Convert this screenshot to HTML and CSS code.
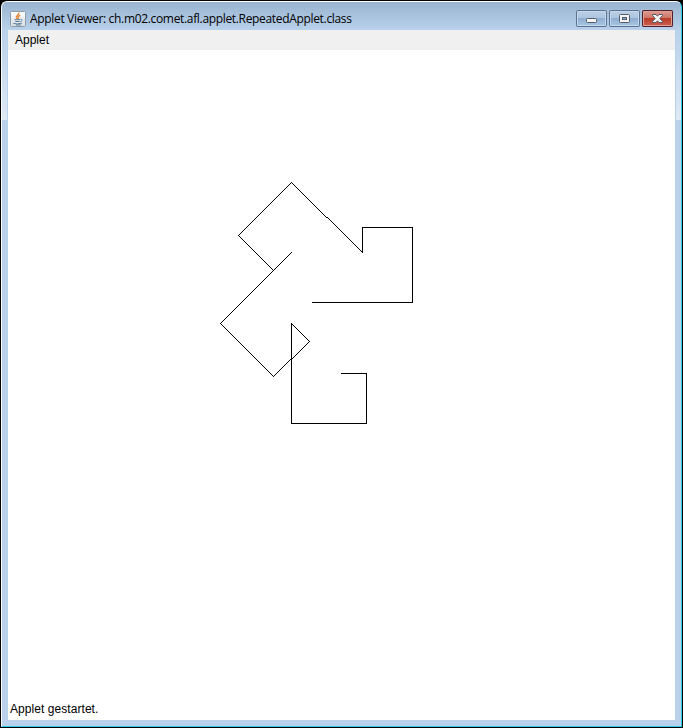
FILE: index.html
```html
<!DOCTYPE html>
<html lang="de">
<head>
<meta charset="utf-8">
<title>Applet Viewer</title>
<link rel="stylesheet" href="styles.css">
</head>
<body>
<div class="window">
  <header class="titlebar">
    <svg class="app-icon" width="16" height="16" viewBox="0 0 16 16">
      <defs><linearGradient id="tile" x2="0" y2="1"><stop stop-color="#fff"/><stop offset="1" stop-color="#d5dce2"/></linearGradient></defs>
      <rect x=".5" y=".5" width="15" height="15" rx="1" fill="url(#tile)" stroke="#8e9daa"/>
      <path d="M9 1.7C9.4 4 5.4 4.6 6.5 6.6L7.6 8M10.2 4.3C8.3 5 7.7 5.8 8.7 7.6" fill="none" stroke="#e8842c" stroke-width="1.4"/>
      <path d="M4.5 8.7H10M5.3 10.5H9.7M10.5 8.4C12.7 7.9 12.6 10 10.5 10.6M3.3 12.4Q7.5 13.7 11.8 12.1M6 14H11" fill="none" stroke="#587b98"/>
    </svg>
    <h1 class="title">Applet Viewer: ch.m02.comet.afl.applet.RepeatedApplet.class</h1>
    <div class="controls">
      <button class="control" aria-label="Minimieren"><svg width="31" height="17"><rect x="10.5" y="8.5" width="10" height="4" rx="1" fill="#f5f5f5" stroke="#555c6b"/></svg></button>
      <button class="control" aria-label="Maximieren"><svg width="31" height="17"><rect x="10.5" y="4.5" width="10" height="8" rx="1" fill="#f5f5f5" stroke="#555c6b"/><rect x="13.5" y="7.5" width="4" height="2" fill="#87a9cd" stroke="#555c6b"/></svg></button>
      <button class="control close" aria-label="Schließen"><svg width="31" height="17"><path d="M10.5 4.5H14L15.5 6.2L17 4.5H20.5V5.5L17.8 8.5L20.5 11.5V12.5H17L15.5 10.8L14 12.5H10.5V11.5L13.2 8.5L10.5 5.5Z" fill="#f5f5f5" stroke="#525667" stroke-linejoin="round"/></svg></button>
    </div>
  </header>
  <main class="client">
    <nav class="menu">Applet</nav>
    <svg class="canvas" width="667" height="650" viewBox="8 50 667 650">
      <g transform="translate(.5 .5)" fill="none" stroke="#000" stroke-linecap="square" shape-rendering="crispEdges">
        <path d="M312 302H412V227H362V252L327 217H326L291 182L238 235L273 270"/>
        <path d="M291 252L220 323L273 376L291 358H292L309 341L291 323V423H366V373H341"/>
      </g>
    </svg>
    <footer class="status">Applet gestartet.</footer>
  </main>
</div>
</body>
</html>
```
FILE: styles.css
```css
* { box-sizing: border-box; }
html, body { margin: 0; height: 100%; }
body {
  background: #000;
  padding: 1px;
  font: 12px/20px "Liberation Sans", Arial, sans-serif;
  color: #000;
  overflow: hidden;
}
.window {
  width: 681px;
  height: 726px;
  padding: 0 6px 6px;
  border: 1px solid #fff;
  border-right-color: #28cdeb;
  border-bottom-color: #28cdeb;
  border-radius: 6px 6px 0 0;
  background:
    linear-gradient(#b9d1ea, #dfe9f5) 0 28px / 5px 90px no-repeat,
    linear-gradient(#b9d1ea, #dfe9f5) 674px 28px / 5px 90px no-repeat,
    linear-gradient(#99b4d1, #b9d1ea 28px);
}
.titlebar {
  display: flex;
  align-items: flex-start;
  height: 28px;
  padding: 8px 2px 0;
}
.app-icon { margin-top: 1px; }
.title {
  flex: 1;
  margin: -1px 0 0 4px;
  font: 12px/20px "Open Sans", sans-serif;
  letter-spacing: -0.33px;
  white-space: nowrap;
}
.controls { display: flex; gap: 2px; }
.control {
  width: 31px;
  height: 17px;
  padding: 0;
  border: 0;
  border-radius: 2px;
  background: linear-gradient(#bed1e6, #acc5e0 48%, #90afd0 50%, #aac8e7);
  box-shadow: inset 0 0 0 1px #5c7291, inset 0 0 0 2px #c6d8eb;
}
.control svg { display: block; }
.close {
  background: linear-gradient(#dfa096, #ce7467 48%, #b93c26 50%, #ce6656);
  box-shadow: inset 0 0 0 1px #501e29, inset 0 0 0 2px #dfa097;
}
.client {
  display: grid;
  grid-template-rows: 20px 650px 20px;
  width: 667px;
  height: 690px;
  background: #fff;
}
.menu { background: #f0f0f0; padding-left: 7px; }
.canvas { display: block; }
.status { padding-left: 2px; line-height: 18px; letter-spacing: 0.06px; }
```
